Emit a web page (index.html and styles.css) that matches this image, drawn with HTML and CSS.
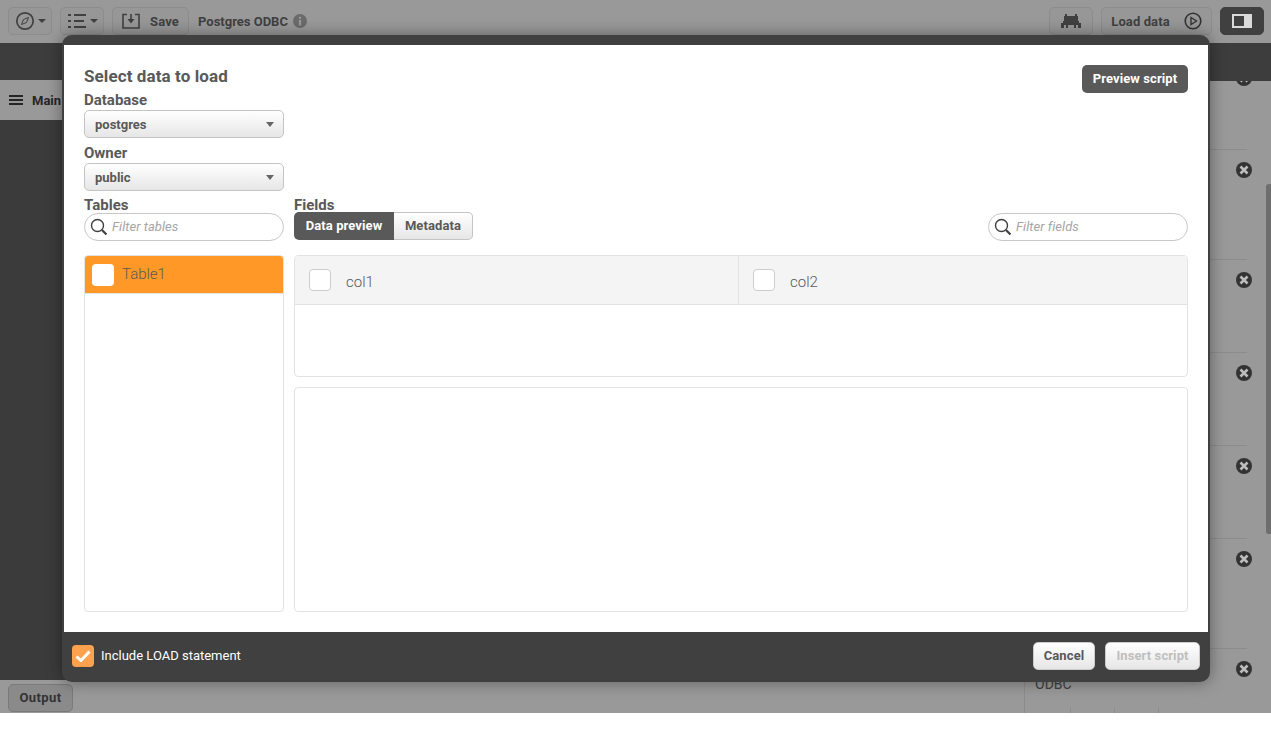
FILE: index.html
```html
<!DOCTYPE html>
<html lang="en">
<head>
<meta charset="utf-8">
<title>Postgres ODBC</title>
<link rel="stylesheet" href="styles.css">
</head>
<body>
<div class="app">
  <header class="toolbar">
    <button class="tb-btn nav-btn"><svg width="20" height="20" viewBox="0 0 20 20" fill="none" stroke="#404040" stroke-width="1.7"><circle cx="10" cy="10" r="8.2"/><path d="M13.500 6.500 11.500 11.500 6.500 13.500 8.500 8.500Z" stroke-width="1"/></svg><span class="caret"></span></button>
    <button class="tb-btn nav-btn"><svg width="20" height="14" viewBox="0 0 20 14" fill="#404040"><rect x="1" y="0" width="3" height="2"/><rect x="7" y="0" width="12" height="2"/><rect x="1" y="6" width="3" height="2"/><rect x="7" y="6" width="10" height="2"/><rect x="1" y="12" width="3" height="2"/><rect x="7" y="12" width="12" height="2"/></svg><span class="caret"></span></button>
    <button class="tb-btn save-btn"><svg width="18" height="16" viewBox="0 0 18 16" fill="none" stroke="#404040" stroke-width="1.6"><path d="M5 1.500H1v13.500h16V1.500h-4"/><path d="M9 1v6"/><path d="M5.500 6 9 10.500 12.500 6z" fill="#404040" stroke="none"/></svg><span>Save</span></button>
    <span class="app-title">Postgres ODBC</span>
    <svg class="info" width="14" height="14" viewBox="0 0 14 14"><circle cx="7" cy="7" r="7" fill="#6b6b6b"/><rect x="5.900" y="6" width="2.200" height="5.500" fill="#9a9a9a"/><rect x="5.900" y="2.800" width="2.200" height="2" fill="#9a9a9a"/></svg>
    <span class="spacer"></span>
    <button class="tb-btn debug-btn"><svg width="20" height="14" viewBox="0 0 20 14" fill="#404040"><path d="M4 0h2v2h8V0h2v2h1v5h1v2h2v5h-3v-3h-2v3h-2v-3H7v3H5v-3H3v3H0V9h2V7h1V2h1z"/></svg></button>
    <button class="tb-btn load-btn"><span>Load data</span><svg width="18" height="18" viewBox="0 0 18 18" fill="none" stroke="#333" stroke-width="1.600"><circle cx="9" cy="9" r="7.800"/><path d="M7 5.500 12.500 9 7 12.500z" stroke-width="1.400"/></svg></button>
    <button class="tb-btn panel-btn"><span class="panel-icon"><i></i></span></button>
  </header>
  <div class="subbar"></div>
  <main class="workspace">
    <section class="editor">
      <div class="main-tab"><svg width="14" height="10" viewBox="0 0 14 10" fill="#262626"><rect width="14" height="2"/><rect y="4" width="14" height="2"/><rect y="8" width="14" height="2"/></svg><span>Main</span></div>
      <div class="code"></div>
      <div class="outbar"><button class="output-btn">Output</button></div>
    </section>
    <aside class="side">
      <div class="side-row r1"><svg class="x x-top" width="16" height="16" viewBox="0 0 16 16"><circle cx="8" cy="8" r="8" fill="#333"/><path d="M4.500 4.500l7 7M11.500 4.500l-7 7" stroke="#bdbdbd" stroke-width="2.600"/></svg></div>
      <div class="side-row tall"><svg class="x" width="16" height="16" viewBox="0 0 16 16"><circle cx="8" cy="8" r="8" fill="#333"/><path d="M4.500 4.500l7 7M11.500 4.500l-7 7" stroke="#bdbdbd" stroke-width="2.600"/></svg></div>
      <div class="side-row"><svg class="x" width="16" height="16" viewBox="0 0 16 16"><circle cx="8" cy="8" r="8" fill="#333"/><path d="M4.500 4.500l7 7M11.500 4.500l-7 7" stroke="#bdbdbd" stroke-width="2.600"/></svg></div>
      <div class="side-row"><svg class="x" width="16" height="16" viewBox="0 0 16 16"><circle cx="8" cy="8" r="8" fill="#333"/><path d="M4.500 4.500l7 7M11.500 4.500l-7 7" stroke="#bdbdbd" stroke-width="2.600"/></svg></div>
      <div class="side-row"><svg class="x" width="16" height="16" viewBox="0 0 16 16"><circle cx="8" cy="8" r="8" fill="#333"/><path d="M4.500 4.500l7 7M11.500 4.500l-7 7" stroke="#bdbdbd" stroke-width="2.600"/></svg></div>
      <div class="side-row tall"><svg class="x" width="16" height="16" viewBox="0 0 16 16"><circle cx="8" cy="8" r="8" fill="#333"/><path d="M4.500 4.500l7 7M11.500 4.500l-7 7" stroke="#bdbdbd" stroke-width="2.600"/></svg></div>
      <div class="side-row last"><svg class="x" width="16" height="16" viewBox="0 0 16 16"><circle cx="8" cy="8" r="8" fill="#333"/><path d="M4.500 4.500l7 7M11.500 4.500l-7 7" stroke="#bdbdbd" stroke-width="2.600"/></svg><span class="odbc">ODBC</span><div class="ticks"><i></i><i></i><i></i></div></div>
      <div class="scroll"></div>
    </aside>
  </main>
</div>

<div class="modal">
  <div class="modal-body">
    <div class="head">
      <div class="sel-col">
        <h1>Select data to load</h1>
        <label class="database">Database</label>
        <div class="select"><span>postgres</span><i class="drop"></i></div>
        <label class="owner">Owner</label>
        <div class="select"><span>public</span><i class="drop"></i></div>
      </div>
      <button class="preview">Preview script</button>
    </div>
    <div class="panes">
      <div class="tables">
        <label>Tables</label>
        <div class="search"><svg width="18" height="18" viewBox="0 0 18 18" fill="none" stroke="#404040"><circle cx="7.500" cy="7.500" r="6" stroke-width="1.400"/><path d="M12 12l4.500 4.500" stroke-width="2.200"/></svg><span>Filter tables</span></div>
        <div class="list">
          <div class="list-item"><span class="check"></span><span class="item-name">Table1</span></div>
        </div>
      </div>
      <div class="fields">
        <label>Fields</label>
        <div class="fields-bar">
          <div class="seg"><span class="on">Data preview</span><span class="off">Metadata</span></div>
          <div class="search narrow"><svg width="18" height="18" viewBox="0 0 18 18" fill="none" stroke="#404040"><circle cx="7.500" cy="7.500" r="6" stroke-width="1.400"/><path d="M12 12l4.500 4.500" stroke-width="2.200"/></svg><span>Filter fields</span></div>
        </div>
        <div class="grid">
          <div class="col c1"><span class="check bordered"></span><span class="col-name">col1</span></div>
          <div class="col c2"><span class="check bordered"></span><span class="col-name">col2</span></div>
          <div class="grid-empty"></div>
        </div>
        <div class="preview-box"></div>
      </div>
    </div>
  </div>
  <footer class="modal-foot">
    <span class="tick"><svg width="16" height="12" viewBox="0 0 16 12" fill="none" stroke="#fff" stroke-width="3"><path d="M1.500 6.500 6 10.500 14.500 1.500"/></svg></span>
    <span class="inc">Include LOAD statement</span>
    <span class="spacer"></span>
    <button class="foot-btn">Cancel</button>
    <button class="foot-btn dis">Insert script</button>
  </footer>
</div>
</body>
</html>
```
FILE: styles.css
```css
* { box-sizing: border-box; }
html, body { margin: 0; height: 741px; overflow: hidden; background: #fff; }
body { font-family: "Roboto", "Liberation Sans", sans-serif; color: #595959; position: relative; }
button { font-family: inherit; padding: 0; margin: 0; letter-spacing: .1px; }
.app { height: 713px; background: #999; display: flex; flex-direction: column; }
.toolbar { height: 43px; background: #999; display: flex; align-items: center; padding: 0 7px 1px 8px; }
.tb-btn { height: 28px; border: 1px solid #8c8c8c; border-radius: 5px; background: #979797; display: flex; align-items: center; justify-content: center; color: #404040; font-weight: 700; font-size: 13px; }
.nav-btn { width: 44px; gap: 3px; margin-right: 8px; }
.caret { width: 0; height: 0; border: 4px solid transparent; border-top: 4px solid #404040; border-bottom: 0; }
.save-btn { width: 77px; gap: 10px; margin-right: 9px; }
.app-title { font-size: 13px; font-weight: 700; color: #404040; margin-right: 5px; }
.spacer { flex: 1; }
.debug-btn { width: 44px; margin-right: 8px; }
.load-btn { width: 111px; gap: 14px; margin-right: 8px; }
.panel-btn { width: 44px; background: #404040; border-color: #404040; }
.panel-icon { width: 20px; height: 14px; background: #d9d9d9; display: block; padding: 2px 8px 2px 2px; }
.panel-icon i { display: block; width: 100%; height: 100%; background: #404040; }
.subbar { height: 37px; background: #3d3d3d; }
.workspace { flex: 1; display: flex; min-height: 0; }
.editor { flex: 1; display: flex; flex-direction: column; min-width: 0; }
.main-tab { height: 40px; background: #999; display: flex; align-items: center; gap: 9px; padding-left: 9px; font-size: 13px; font-weight: 700; color: #262626; }
.code { flex: 1; background: #3b3b3b; }
.outbar { height: 33px; background: #999; padding: 4px 8px; }
.output-btn { width: 65px; height: 28px; padding-bottom: 2px; border: 1px solid #7a7a7a; border-radius: 5px; background: #8a8a8a; font-size: 13px; font-weight: 700; color: #333; letter-spacing: .4px; }
.side { width: 247px; border-left: 1px solid #8c8c8c; border-top: 1px solid #3d3d3d; position: relative; background: #999; overflow: hidden; }
.side-row { height: 93px; border-bottom: 1px solid #8c8c8c; margin-right: 24px; position: relative; }
.r1 { height: 69px; }
.tall { height: 110px; }
.x { position: absolute; left: 211px; top: 12px; }
.x-top { top: -11px; }
.last { border-bottom: 0; height: 64px; }
.odbc { position: absolute; left: 10px; top: 27px; font-size: 14px; line-height: 16px; color: #404040; }
.ticks { position: absolute; left: 45px; top: 59px; display: flex; gap: 43px; }
.ticks i { display: block; width: 1px; height: 5px; background: #8c8c8c; }
.scroll { position: absolute; right: 0; top: 103px; width: 5px; height: 350px; background: #6e6e6e; border-radius: 3px 0 0 3px; }

.modal { position: absolute; left: 62px; top: 35px; width: 1148px; height: 647px; background: #404040; border-radius: 10px; padding: 10px 2px 0; display: flex; flex-direction: column; box-shadow: 0 0 16px rgba(0,0,0,.4); }
.modal-body { flex: 1; background: #fff; padding: 22px 20px 20px; display: flex; flex-direction: column; min-height: 0; }
.head { display: flex; justify-content: space-between; align-items: flex-start; }
h1 { margin: 0; font-size: 17px; line-height: 19px; font-weight: 700; color: #595959; letter-spacing: .1px; }
label { display: block; font-size: 15px; line-height: 17px; font-weight: 700; color: #595959; }
.sel-col { width: 200px; }
.sel-col .database { margin-top: 6px; margin-bottom: 1px; }
.sel-col .owner { margin-top: 7px; margin-bottom: 1px; }
.select { height: 28px; border: 1px solid #c4c4c4; border-radius: 5px; background: linear-gradient(#fff, #e6e6e6); display: flex; align-items: center; justify-content: space-between; padding: 0 9px 0 10px; font-size: 13px; font-weight: 700; color: #595959; }
.drop { width: 0; height: 0; border: 4.500px solid transparent; border-top: 5px solid #666; border-bottom: 0; }
.preview { margin-top: -2px; width: 106px; height: 28px; padding-bottom: 2px; background: #595959; color: #fff; border: 0; border-radius: 5px; font-size: 13px; font-weight: 700; }
.panes { flex: 1; display: flex; gap: 10px; min-height: 0; margin-top: 6px; }
.tables { width: 200px; display: flex; flex-direction: column; }
.tables label { margin-bottom: -1px; }
.search { height: 28px; width: 200px; border: 1px solid #c8c8c8; border-radius: 14px; display: flex; align-items: center; gap: 4px; padding-left: 5px; font-size: 13px; font-style: italic; color: #a6a6a6; letter-spacing: .05px; }
.search span { margin-bottom: 2px; }
.list { flex: 1; margin-top: 14px; border: 1px solid #e3e3e3; border-radius: 4px; overflow: hidden; }
.list-item { height: 38px; background: #ff9826; display: flex; align-items: center; gap: 8px; padding-left: 7px; font-size: 15px; font-weight: 300; color: #595959; border-bottom: 1px solid #e3e3e3; }
.item-name { margin-bottom: 2px; }
.check { width: 22px; height: 22px; border-radius: 4px; background: #fff; }
.check.bordered { border: 1px solid #ccc; }
.fields { flex: 1; display: flex; flex-direction: column; min-width: 0; }
.fields label { margin-bottom: -2px; }
.fields-bar { display: flex; justify-content: space-between; align-items: flex-start; }
.narrow { margin-top: 1px; }
.seg { display: flex; height: 28px; font-size: 13px; font-weight: 700; letter-spacing: .1px; }
.seg span { display: flex; align-items: center; justify-content: center; padding-bottom: 2px; }
.seg .on { width: 100px; background: #595959; color: #fff; border-radius: 5px 0 0 5px; }
.seg .off { width: 79px; background: linear-gradient(#fff, #e6e6e6); border: 1px solid #c4c4c4; border-left: 0; border-radius: 0 5px 5px 0; }
.grid { margin-top: 14px; height: 122px; border: 1px solid #e3e3e3; border-radius: 4px; display: grid; grid-template-columns: 444px 1fr; grid-template-rows: 49px 1fr; overflow: hidden; flex-shrink: 0; }
.col { background: #f4f4f4; border-bottom: 1px solid #e3e3e3; display: flex; align-items: center; gap: 15px; padding-left: 14px; font-size: 15px; font-weight: 300; color: #595959; }
.col-name { margin-top: 4px; }
.c1 { border-right: 1px solid #e3e3e3; }
.grid-empty { grid-column: 1 / 3; }
.preview-box { flex: 1; margin-top: 10px; border: 1px solid #e3e3e3; border-radius: 4px; }
.modal-foot { height: 50px; display: flex; align-items: center; padding: 0 8px 2px; flex-shrink: 0; }
.tick { width: 22px; height: 22px; border-radius: 4px; background: #ffa24d; display: flex; align-items: center; justify-content: center; margin-right: 7px; }
.inc { color: #fff; font-size: 13px; margin-bottom: 2px; }
.foot-btn { height: 28px; padding-bottom: 2px; border: 1px solid #ccc; border-radius: 5px; background: linear-gradient(#fff, #e6e6e6); width: 62px; font-size: 13px; font-weight: 700; color: #595959; margin-left: 10px; }
.foot-btn.dis { width: 95px; color: #bfbfbf; }
```
